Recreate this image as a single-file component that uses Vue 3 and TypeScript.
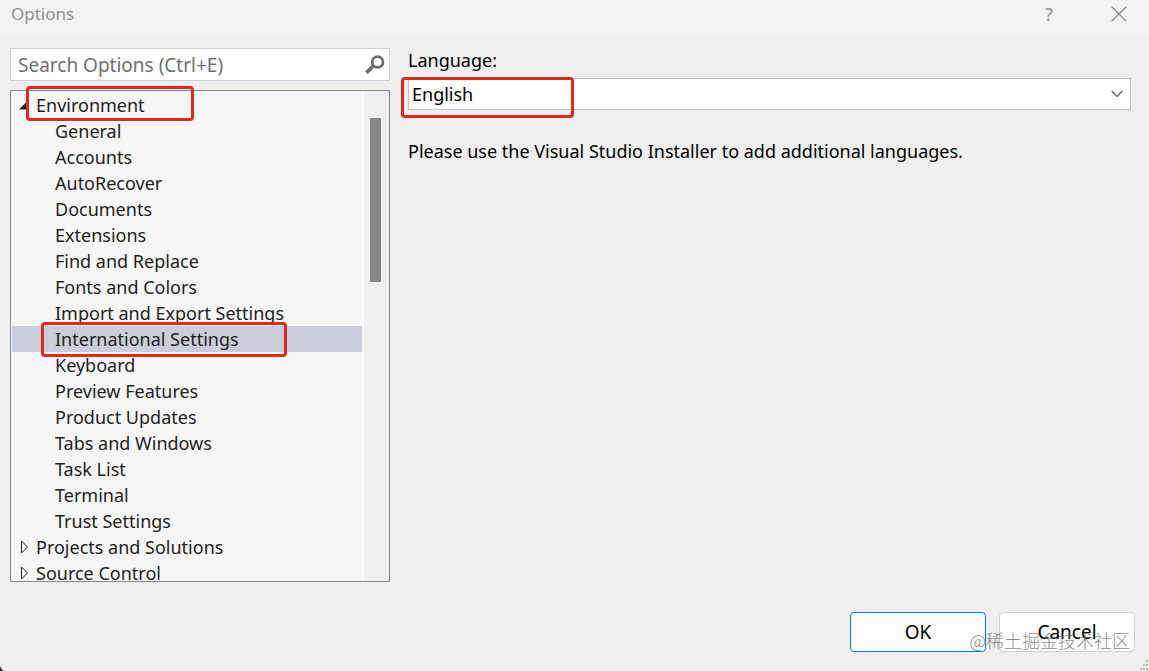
<script setup lang="ts">
import { computed, ref } from 'vue'

interface TreeNode {
  label: string
  expanded: boolean
  marked?: boolean
  children: string[]
}

const query = ref('')
const language = ref('English')
const selected = ref('International Settings')

const nodes = ref<TreeNode[]>([
  {
    label: 'Environment',
    expanded: true,
    marked: true,
    children: [
      'General',
      'Accounts',
      'AutoRecover',
      'Documents',
      'Extensions',
      'Find and Replace',
      'Fonts and Colors',
      'Import and Export Settings',
      'International Settings',
      'Keyboard',
      'Preview Features',
      'Product Updates',
      'Tabs and Windows',
      'Task List',
      'Terminal',
      'Trust Settings',
    ],
  },
  { label: 'Projects and Solutions', expanded: false, children: [] },
  { label: 'Source Control', expanded: false, children: [] },
])

const visibleNodes = computed(() => {
  const q = query.value.trim().toLowerCase()
  if (!q) return nodes.value
  return nodes.value
    .map((n) => ({ ...n, children: n.children.filter((c) => c.toLowerCase().includes(q)) }))
    .filter((n) => n.children.length > 0 || n.label.toLowerCase().includes(q))
})

function toggle(label: string) {
  const node = nodes.value.find((n) => n.label === label)
  if (node) node.expanded = !node.expanded
}
</script>

<template>
  <div class="dialog">
    <header class="titlebar">
      <h1 class="title">Options</h1>
      <button class="caption help" type="button" aria-label="Help">?</button>
      <button class="caption" type="button" aria-label="Close">
        <svg width="16" height="16" viewBox="0 0 16 16" fill="none" stroke="#8a8a8a" stroke-width="1.3">
          <path d="M.7.7l14.6 14.6M15.3.7L.7 15.3" />
        </svg>
      </button>
    </header>

    <main class="body">
      <aside class="sidebar">
        <div class="search">
          <input v-model="query" type="text" aria-label="Search Options" placeholder="Search Options (Ctrl+E)" />
          <button class="search-button" type="button" aria-label="Search">
            <svg width="20" height="20" viewBox="0 0 20 20" fill="none" stroke="#6b6b6b">
              <circle cx="12.6" cy="7" r="5.4" stroke-width="2.8" />
              <path d="M8.6 10.8L1.4 17.6" stroke-width="3.6" />
            </svg>
          </button>
        </div>

        <div class="tree-box">
          <ul class="tree">
            <li v-for="node in visibleNodes" :key="node.label">
              <button class="row parent" type="button" :aria-expanded="node.expanded" @click="toggle(node.label)">
                <svg class="arrow" width="12" height="14" viewBox="0 0 12 14">
                  <path v-if="node.expanded" d="M1 11.5H10V2.5Z" fill="#1e1e1e" />
                  <path v-else d="M3.5 1V13L9.5 7Z" fill="none" stroke="#1e1e1e" />
                </svg>
                <span class="label">{{ node.label }}</span>
                <span v-if="node.marked" class="mark mark-parent"></span>
              </button>
              <ul v-if="node.expanded" class="children">
                <li v-for="child in node.children" :key="child">
                  <button
                    class="row child"
                    :class="{ selected: child === selected }"
                    type="button"
                    @click="selected = child"
                  >
                    <span class="label">{{ child }}</span>
                    <span v-if="child === 'International Settings'" class="mark mark-child"></span>
                  </button>
                </li>
              </ul>
            </li>
          </ul>
          <div class="track"><div class="thumb"></div></div>
        </div>
      </aside>

      <section class="page">
        <label class="field-label" for="language">Language:</label>
        <div class="select-wrap">
          <select id="language" v-model="language">
            <option>English</option>
          </select>
          <svg class="chevron" width="12" height="8" viewBox="0 0 12 8" fill="none" stroke="#555" stroke-width="1.2">
            <path d="M.7 1L6 6.5L11.3 1" />
          </svg>
          <span class="mark mark-select"></span>
        </div>
        <p class="hint">Please use the Visual Studio Installer to add additional languages.</p>
      </section>
    </main>

    <footer class="footer">
      <button class="action primary" type="button">OK</button>
      <button class="action" type="button">Cancel</button>
    </footer>

    <div class="watermark">@稀土掘金技术社区</div>
    <svg class="grip" width="10" height="12" viewBox="0 0 10 12" fill="#b4b4b4">
      <path d="M7 1h2v2h-2zM4 5h2v2h-2zM7 5h2v2h-2zM1 9h2v2h-2zM4 9h2v2h-2zM7 9h2v2h-2z" />
    </svg>
    <svg class="corner" width="4" height="5" viewBox="0 0 4 5"><path d="M0 0Q1 3 4 5H0Z" fill="#333" /></svg>
  </div>
</template>

<style>
body {
  margin: 0;
  background: #efefef;
}
</style>

<style scoped>
.dialog {
  position: relative;
  box-sizing: border-box;
  display: flex;
  flex-direction: column;
  height: 100vh;
  min-height: 320px;
  overflow: hidden;
  background: #efefef;
  color: #1e1e1e;
  font: 18px/26px 'Noto Sans', 'Noto Sans CJK SC', sans-serif;
}

button,
input,
select {
  font: inherit;
  color: inherit;
}

button {
  padding: 0;
  border: 0;
  background: none;
}

ul {
  margin: 0;
  padding: 0;
  list-style: none;
}

.titlebar {
  display: flex;
  align-items: center;
  height: 28px;
  padding: 0 20px 6px 11px;
  background: #f3f3f3;
  color: #8f8f8f;
}

.title {
  flex: 1;
  margin: 0;
  font-size: 17px;
  font-weight: 400;
}

.caption {
  display: flex;
  align-items: center;
  justify-content: center;
  width: 20px;
  height: 26px;
}

.help {
  margin-right: 50px;
}

.body {
  flex: 1;
  display: flex;
  gap: 18px;
  min-height: 0;
  padding: 14px 18px 0 10px;
}

.sidebar {
  display: flex;
  flex-direction: column;
  flex: none;
  gap: 9px;
  width: 380px;
}

.search {
  box-sizing: border-box;
  display: flex;
  align-items: center;
  height: 33px;
  border: 1px solid #cccedb;
  background: #fff;
}

.search input {
  flex: 1;
  min-width: 0;
  padding: 0 7px;
  border: 0;
  outline: 0;
  background: none;
  font-size: 19px;
}

.search input::placeholder {
  color: #6f6f6f;
  opacity: 1;
}

.search-button {
  display: flex;
  margin-right: 4px;
}

.tree-box {
  flex: 1;
  display: flex;
  min-height: 0;
  border: 1px solid #828790;
}

/* Clips the list at the bottom while the first row's outline may rise above the top edge. */
.tree {
  flex: 1;
  padding: 1px 1px 0;
  background: #f6f6f6;
  clip-path: inset(-10px 0 0 0);
}

.row {
  position: relative;
  display: flex;
  align-items: center;
  width: 100%;
  height: 26px;
  text-align: left;
  white-space: nowrap;
}

.parent {
  gap: 6px;
  padding-left: 6px;
}

.child {
  padding-left: 43px;
}

.selected {
  background: #cccedb;
}

.track {
  box-sizing: border-box;
  width: 26px;
  padding: 27px 0 0 6px;
  border-left: 1px solid #fff;
  background: #efefef;
}

.thumb {
  width: 11px;
  height: 164px;
  background: #868686;
}

.mark {
  position: absolute;
  z-index: 1;
  box-sizing: border-box;
  border: 3px solid #e5281e;
  border-radius: 4px;
  pointer-events: none;
}

.mark-parent {
  left: 14px;
  top: -6px;
  width: 168px;
  height: 35px;
}

.mark-child {
  left: 29px;
  top: -4px;
  width: 246px;
  height: 35px;
}

.mark-select {
  left: -7px;
  top: -1px;
  width: 173px;
  height: 41px;
}

.page {
  flex: 1;
  min-width: 0;
  color: #000;
}

.field-label {
  display: block;
  margin-bottom: 6px;
  line-height: 24px;
}

.select-wrap {
  position: relative;
}

select {
  display: block;
  width: 100%;
  height: 32px;
  padding: 0 32px 0 3px;
  border: 1px solid #c2c2c2;
  border-radius: 0;
  background: #fdfdfd;
  appearance: none;
}

.chevron {
  position: absolute;
  right: 8px;
  top: 12px;
  pointer-events: none;
}

.hint {
  margin: 28px 0 0;
}

.footer {
  display: flex;
  justify-content: flex-end;
  gap: 13px;
  padding: 30px 14px 19px;
}

.action {
  box-sizing: border-box;
  width: 136px;
  height: 40px;
  border: 1px solid #d0d0d0;
  border-radius: 4px;
  background: #fdfdfd;
  color: #000;
  font-size: 19px;
}

.primary {
  border-color: #0078d4;
}

.watermark {
  position: absolute;
  right: 19px;
  bottom: 18px;
  color: rgba(100, 100, 100, 0.75);
  font: 18px/26px 'Noto Sans CJK SC', sans-serif;
  font-weight: 300;
  pointer-events: none;
}

.grip {
  position: absolute;
  right: 0;
  bottom: 0;
}

.corner {
  position: absolute;
  left: 0;
  bottom: 0;
}
</style>
